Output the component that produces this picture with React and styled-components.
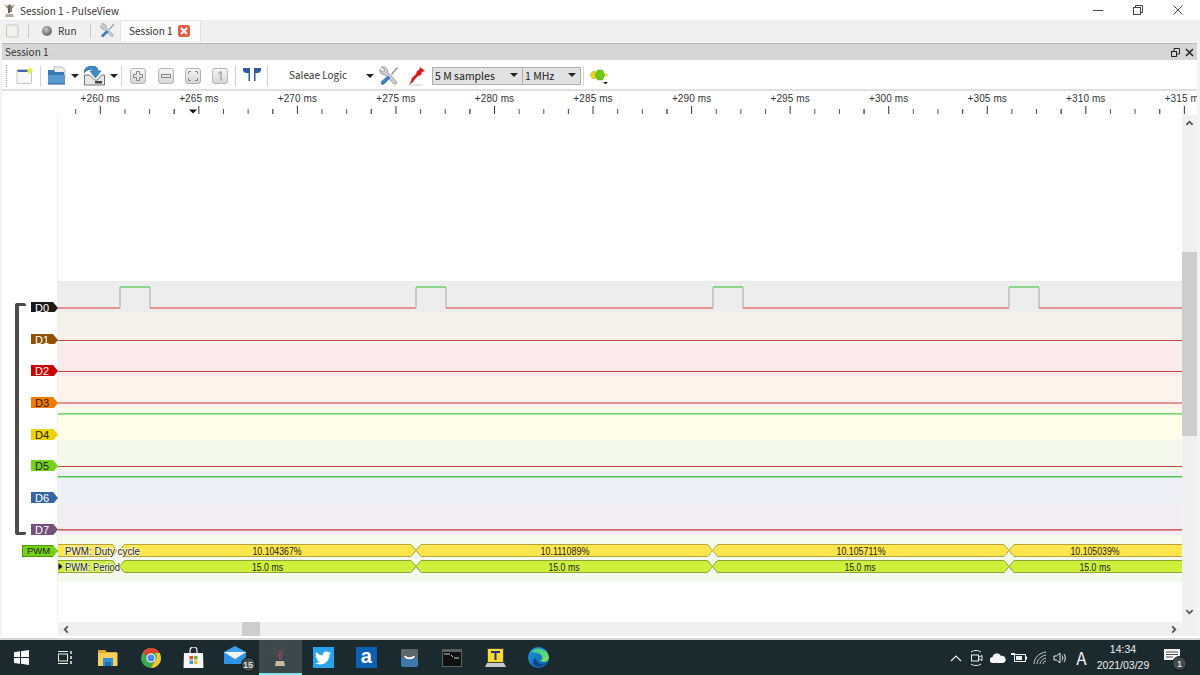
import React from "react";
import styled, { createGlobalStyle } from "styled-components";
import { FaTwitter } from "react-icons/fa";

const Global = createGlobalStyle`
  html, body { margin: 0; padding: 0; background: #fff; overflow: hidden; }
  body { font-family: "Liberation Sans", Arial, sans-serif; color: #222; }
  * { box-sizing: border-box; }
`;

const UI = `"Noto Sans CJK JP", "Liberation Sans", sans-serif`;
const Window = styled.div`width:1200px;height:675px;display:flex;flex-direction:column;background:#fff;overflow:hidden;`;

/* title */
const TitleBar = styled.div`height:20px;display:flex;align-items:center;padding-left:3px;font:10px ${UI};color:#333;flex:none;`;
const TitleText = styled.span`margin-left:4px;flex:1;`;
const WinControls = styled.div`display:flex;width:120px;margin-right:2px;`;
const WinButton = styled.div`width:40px;height:20px;display:flex;align-items:center;justify-content:center;`;

/* tabs */
const TabBar = styled.div`height:21px;background:#f0f0f0;display:flex;align-items:flex-end;flex:none;`;
const TabTool = styled.div`height:20px;display:flex;align-items:center;flex:none;width:${p => p.$w}px;margin-left:${p => p.$ml || 0}px;gap:5px;font:10px ${UI};color:#333;padding-bottom:1px;`;
const TabSep = styled.div`width:1px;height:14px;background:#c8c8c8;margin:0 0 3px ${p => p.$ml}px;flex:none;`;
const Tab = styled.div`width:81px;height:21px;background:#fbfbfb;border:1px solid #e2e2e2;border-bottom:none;margin-left:5px;display:flex;align-items:center;padding:0 0 1px 8px;font:10px ${UI};color:#333;gap:5px;`;
const TabClose = styled.span`width:12px;height:12px;background:#e2604a;border-radius:2px;color:#fff;display:flex;align-items:center;justify-content:center;`;

/* dock */
const Dock = styled.div`flex:1;display:flex;flex-direction:column;background:#f3f3f3;padding:2px 3px 0 2px;min-height:0;`;
const DockHeader = styled.div`height:17px;flex:none;background:#d6d6d6;border-top:1px solid #b9b9b9;display:flex;align-items:center;padding:0 3px;font:10px ${UI};color:#333;justify-content:space-between;`;
const DockTitle = styled.span`margin-bottom:2px;`;
const DockButtons = styled.div`display:flex;gap:5px;align-items:center;`;
const Toolbar = styled.div`height:31px;flex:none;background:#fff;border-bottom:2px solid #dfdfdf;display:flex;align-items:center;padding-top:2px;`;
const Grip = styled.div`width:1px;height:22px;margin-left:4px;border-left:1px dotted #999;flex:none;`;
const Slot = styled.div`flex:none;width:${p => p.$w}px;margin-left:${p => p.$ml || 0}px;display:flex;align-items:center;justify-content:center;`;
const ToolSep = styled.div`flex:none;width:1px;height:20px;background:#d4d4d4;margin-left:${p => p.$ml}px;`;
const ZoomBtn = styled.div`flex:none;width:16px;height:16px;margin-left:${p => p.$ml}px;border:1px solid #b4b4b4;border-radius:3px;background:linear-gradient(#f6f6f6,#d6d6d6);display:flex;align-items:center;justify-content:center;`;
const DeviceName = styled.span`flex:none;width:57px;margin:0 0 2px 21px;font:10px ${UI};color:#333;white-space:nowrap;`;
const Combo = styled.div`flex:none;width:${p => p.$w}px;height:18px;background:#e1e1e1;border:1px solid #adadad;margin-left:${p => p.$ml || 0}px;display:flex;align-items:center;justify-content:space-between;padding:0 4px 1px 2px;font:10.5px ${UI};color:#222;`;
const Caret = styled.span`display:block;width:0;height:0;border-left:4px solid transparent;border-right:4px solid transparent;border-top:4px solid #222;`;

const RulerBox = styled.div`height:24px;flex:none;background:#fff;`;
const RulerText = styled.text`font:10px "Liberation Sans",sans-serif;fill:#333;letter-spacing:.1px;`;

const Main = styled.div`flex:1;display:flex;min-height:0;background:#fff;`;
const Content = styled.div`flex:1;display:flex;flex-direction:column;min-width:0;`;
const Traces = styled.div`flex:1;position:relative;display:flex;flex-direction:column;`;
const Row = styled.div`display:flex;flex:none;height:${p => p.$h}px;`;
const FillRow = styled.div`display:flex;flex:1;min-height:0;`;
const Gutter = styled.div`width:56px;flex:none;background:#fff;border-right:1px solid #efefef;display:flex;justify-content:flex-end;padding-top:${p => p.$pt || 0}px;position:relative;z-index:1;`;
const Lane = styled.div`flex:1;background:${p => p.$bg || "#fff"};position:relative;min-width:0;`;
const LaneSvg = styled.svg`display:block;overflow:${p => p.$clip ? "hidden" : "visible"};position:absolute;left:0;top:0;`;
const ChannelTag = styled.div`width:${p => p.$w || 27}px;height:12px;margin-right:-1px;background:${p => p.$c};color:${p => p.$t};${p => p.$edge ? `box-shadow:inset 0 0 0 1px ${p.$edge};` : ""}clip-path:polygon(0 0,calc(100% - 5px) 0,100% 50%,calc(100% - 5px) 100%,0 100%);font:${p => p.$fs || 11}px "Liberation Sans",sans-serif;line-height:12px;display:flex;align-items:center;padding-left:${p => p.$pl || 4}px;flex:none;`;
const Bracket = styled.div`position:absolute;left:13px;top:188px;width:11px;height:232px;border:3px solid #4c4c4a;border-left-width:4px;border-right:none;border-radius:2px;z-index:2;`;
const AnnoText = styled.text`font:10.5px "Liberation Sans",sans-serif;fill:#222;text-anchor:middle;`;
const AnnoTitle = styled.text`font:10.5px "Liberation Sans",sans-serif;fill:#222;paint-order:stroke;stroke:#ffffffaa;stroke-width:2px;`;

const HScroll = styled.div`height:14px;flex:none;margin-left:56px;background:#f0f0f0;display:flex;align-items:center;justify-content:space-between;padding:0 4px;position:relative;`;
const HThumb = styled.div`position:absolute;left:184px;top:0;width:18px;height:14px;background:#cdcdcd;`;
const VScroll = styled.div`width:15px;flex:none;background:#f0f0f0;display:flex;flex-direction:column;align-items:center;justify-content:space-between;padding:4px 0 20px;position:relative;`;
const VThumb = styled.div`position:absolute;left:0;top:137px;width:15px;height:184px;background:#cdcdcd;`;
const Edge = styled.div`height:4px;flex:none;background:#fff;border-bottom:2px solid #d8d8d8;margin:0 -3px 0 -2px;`;

/* taskbar */
const Taskbar = styled.div`height:35px;flex:none;background:#1b2a2f;display:flex;align-items:center;color:#fff;`;
const TaskSlot = styled.div`width:43.1px;height:35px;flex:none;display:flex;align-items:center;justify-content:center;position:relative;${p => p.$active ? "background:#3b484c;border-bottom:2px solid #7fe6ee;" : ""}`;
const Badge = styled.span`position:absolute;right:${p => p.$r || 3}px;bottom:${p => p.$b || 3}px;width:15px;height:15px;border-radius:50%;background:#3d4a4e;border:1px solid #111;color:#ddd;font:700 9px "Liberation Sans",sans-serif;display:flex;align-items:center;justify-content:center;`;
const Tray = styled.div`margin-left:auto;display:flex;align-items:center;height:35px;padding-right:9px;`;
const TrayItem = styled.div`width:21px;height:35px;display:flex;align-items:center;justify-content:center;font:17px ${UI};color:#f0f0f0;`;
const Clock = styled.div`width:62px;margin-right:3px;display:flex;flex-direction:column;align-items:center;gap:3px;font:10.5px "Liberation Sans",sans-serif;color:#eee;line-height:13px;`;
const Notify = styled.div`width:34px;height:35px;display:flex;align-items:center;justify-content:center;position:relative;`;

/* data */
const T0 = 100.3, P = 98.55;
const majors = Array.from({ length: 12 }, (_, i) => i);
const px = x => x - 2;

function Ruler() {
  return (
    <RulerBox>
      <svg width="1195" height="24" style={{ display: "block" }}>
        {majors.map(i => (
          <g key={i}>
            <RulerText x={px(T0 + i * P)} y="11" textAnchor="middle">+{260 + i * 5} ms</RulerText>
            <rect x={px(T0 + i * P) - .5} y="15" width="1" height="8" fill="#333" />
            {[-1, 1, 2, 3].map(k => {
              const x = px(T0 + i * P + k * P / 4);
              if (x > 1195 || (k !== -1 && i === 11)) return null;
              return <rect key={k} x={x - .5} y="18" width="1" height="5" fill="#555" />;
            })}
          </g>
        ))}
        <path d={`M${px(189)} 18.5h8l-4 4z`} fill="#111" />
      </svg>
    </RulerBox>
  );
}

const RED = "#c64646", SOFT = "#e07474", GREEN = "#4cc74c";
const channels = [
  { n: "D0", h: 31, pt: 21, bg: "#ededed", c: "#1a1a1a", t: "#fff" },
  { n: "D1", h: 32, pt: 22, bg: "#f5f0e9", c: "#8f5202", t: "#fff", y: 28.5, s: RED, w: 1 },
  { n: "D2", h: 32, pt: 21, bg: "#fbeaea", c: "#cc0000", t: "#fff", y: 27.5, s: RED, w: 1 },
  { n: "D3", h: 32, pt: 21, bg: "#fef3ea", c: "#f57900", t: "#222", y: 27, s: SOFT, w: 1.6 },
  { n: "D4", h: 32, pt: 20.5, bg: "#fefde8", c: "#edd400", t: "#222", y: 5.8, s: GREEN, w: 1.3 },
  { n: "D5", h: 31, pt: 20, bg: "#f2f8ea", c: "#73d216", t: "#222", y: 26.5, s: RED, w: 1 },
  { n: "D6", h: 32, pt: 21, bg: "#eef0f7", c: "#3465a4", t: "#fff", y: 5.8, s: GREEN, w: 1.4 },
  { n: "D7", h: 32, pt: 20.5, bg: "#f1edf2", c: "#75507b", t: "#fff", y: 26.8, s: "#c83838", w: 1.3 },
];
const pulses = [[62, 92], [358, 388], [655, 685], [951, 981]];

function Wave() {
  let prev = 0;
  const parts = [];
  pulses.forEach(([a, b], i) => {
    parts.push(<path key={"l" + i} d={`M${prev} 27H${a}`} stroke={SOFT} strokeWidth="1.6" fill="none" />);
    parts.push(<path key={"e" + i} d={`M${a} 6V27M${b} 6V27`} stroke="#bdbdbd" strokeWidth="1.5" fill="none" />);
    parts.push(<path key={"h" + i} d={`M${a} 6H${b}`} stroke="#6ecf6e" strokeWidth="1.5" fill="none" />);
    prev = b;
  });
  parts.push(<path key="end" d={`M${prev} 27H1124`} stroke={SOFT} strokeWidth="1.6" fill="none" />);
  return <LaneSvg width="1124" height="32">{parts}</LaneSvg>;
}

function Channel({ ch }) {
  return (
    <Row $h={ch.h}>
      <Gutter $pt={ch.pt}><ChannelTag $c={ch.c} $t={ch.t}>{ch.n}</ChannelTag></Gutter>
      <Lane $bg={ch.bg}>
        {ch.n === "D0" ? <Wave /> : (
          <LaneSvg width="1124" height="32">
            <path d={`M0 ${ch.y}H1124`} stroke={ch.s} strokeWidth={ch.w} fill="none" />
          </LaneSvg>
        )}
      </Lane>
    </Row>
  );
}

const edges = [61.5, 358, 654.5, 951];
function AnnoRow({ top, fill, stroke, labels, len }) {
  const b = top + 12;
  const m = top + 6;
  const seg = (x0, x1) => `M${x0 + 5} ${top}H${x1 - 5}L${x1} ${m}L${x1 - 5} ${b}H${x0 + 5}L${x0} ${m}Z`;
  return (
    <g>
      <path d={`M-2 ${top}H${edges[0] - 7}L${edges[0] - 3} ${m}L${edges[0] - 7} ${b}H-2`} fill={fill} stroke={stroke} />
      {edges.map((e, i) => (
        <path key={i} d={i === 3 ? `M1125 ${top}H${e + 5}L${e} ${m}L${e + 5} ${b}H1125` : seg(e, edges[i + 1])} fill={fill} stroke={stroke} />
      ))}
      {labels.map(([x, s], i) => <AnnoText key={i} x={x} y={top + 10} textLength={len} lengthAdjust="spacingAndGlyphs">{s}</AnnoText>)}
    </g>
  );
}

function Decoder() {
  return (
    <Row $h={47}>
      <Gutter $pt={10}><ChannelTag $c="#73d216" $t="#222" $edge="#4e9a06" $w={36} $pl={5} $fs={9.5}>PWM</ChannelTag></Gutter>
      <Lane $bg="#f4fbea">
        <LaneSvg width="1124" height="47" $clip>
          <AnnoRow top={9.5} fill="#fde54c" stroke="#b5a440" len={49} labels={[[219, "10.104367%"], [507, "10.111089%"], [803, "10.105711%"], [1037, "10.105039%"]]} />
          <AnnoRow top={25.5} fill="#cdf03a" stroke="#93a236" len={31} labels={[[209.5, "15.0 ms"], [506, "15.0 ms"], [802, "15.0 ms"], [1037, "15.0 ms"]]} />
          <AnnoTitle x="7" y="19.5" textLength="75" lengthAdjust="spacingAndGlyphs">PWM: Duty cycle</AnnoTitle>
          <AnnoTitle x="7" y="35.5" textLength="55" lengthAdjust="spacingAndGlyphs">PWM: Period</AnnoTitle>
          <path d="M0.5 28l4 3.500-4 3.500z" fill="#111" />
        </LaneSvg>
      </Lane>
    </Row>
  );
}

/* icons */
const Chev = ({ d, size = 9 }) => (
  <svg width={size} height={size} viewBox="0 0 10 10"><path d={d} fill="none" stroke="#555" strokeWidth="2" /></svg>
);
const NewIcon = () => (
  <svg width="18" height="18" viewBox="0 0 18 18">
    <rect x="1" y="2.500" width="14.500" height="14" rx="1" fill="#f8f8f4" stroke="#c4c4c0" />
    <rect x="1.500" y="3" width="13" height="2" fill="#3c6ea8" />
    <circle cx="14" cy="3.500" r="2.600" fill="#f3e83c" />
  </svg>
);
const OpenIcon = () => (
  <svg width="20" height="20" viewBox="0 0 20 20">
    <path d="M7 1h8l3 3v9H7z" fill="#efefef" stroke="#aaa" strokeWidth=".8" />
    <path d="M1 4h6l1 2h9v12H1z" fill="#3a78b8" />
    <path d="M1 9h17v9H1z" fill="#5a9ad2" />
    <path d="M1 18h17" stroke="#2a5a90" />
  </svg>
);
const SaveIcon = () => (
  <svg width="21" height="20" viewBox="0 0 21 20">
    <path d="M.5 9h5l5 5h3l4-5h3v10H.5z" fill="#e4e6e7" stroke="#555" strokeWidth=".8" />
    <rect x="11" y="15" width="7" height="2.500" fill="#444" />
    <path d="M0 7C0 2 4 0 8 0s6 2 6 5h3l-5.500 7L6 5h3C9 4 8 3.500 7 3.500 4 3.500 2 5 0 7z" fill="#3e8ccb" stroke="#1d5a8e" strokeWidth=".6" />
  </svg>
);
const FlagIcon = () => (
  <svg width="20" height="18" viewBox="0 0 20 18" fill="#2a5f9a">
    <path d="M1 1h7v13H6.500V6H4C2.500 6 1 4.500 1 3zM19 1h-7v13h1.500V6H16c1.500 0 3-1.500 3-3z" />
  </svg>
);
const ToolsIcon = ({ s = 20 }) => (
  <svg width={s} height={s} viewBox="0 0 20 20">
    <path d="M2 1l3.500 3-.5 1.500L3.500 6 1 3c-1 3 1 6 4 5.500L15 18c1.500 1 3.500-.5 2.500-2.500L8.500 6C9 3 6 0 2 1z" fill="#c6ccd0" stroke="#808080" strokeWidth=".6" />
    <path d="M18 1l1 1-6 7-1-1z" fill="#8a8f92" />
    <path d="M9 10l2 2-6 6c-2 1.500-4-.5-2.500-2.500z" fill="#3f7fc0" stroke="#25558a" strokeWidth=".5" />
  </svg>
);
const ProbeIcon = () => (
  <svg width="18" height="20" viewBox="0 0 18 20">
    <path d="M12 1l5 4-3 1-1 3-3 1-5 5-2-2 5-5 1-3 2-1z" fill="#d91a1a" />
    <path d="M4 13l2 2-5 4z" fill="#c41515" />
    <path d="M3 19h12" stroke="#ddd" strokeWidth="1.500" />
  </svg>
);
const DecoderIcon = () => (
  <svg width="20" height="18" viewBox="0 0 20 18">
    <path d="M1 8l2.500-3.500h3L8 8l-1.500 3.500h-3z" fill="#f0d020" stroke="#c0a520" strokeWidth=".5" />
    <path d="M6 8l2.500-5h5L16 8l-2.500 5h-5z" fill="#6ec81a" stroke="#5aa515" strokeWidth=".5" />
    <path d="M16 8l1-1.500h1L19 8l-1 1.500h-1z" fill="#f0d020" />
    <path d="M14 15h5l-2.500 2.500z" fill="#222" />
  </svg>
);
const Hourglass = () => (
  <svg width="13" height="15" viewBox="0 0 13 15">
    <path d="M1 1l4 5v3H9V6l3-5-3 2-2-2-3 2z" fill="#8a7f70" />
    <path d="M3 11h7l1 3H2z" fill="#b9ac95" />
    <path d="M6 3v7" stroke="#6a5f50" strokeWidth="2" />
  </svg>
);
const TabNew = () => (
  <svg width="13" height="14" viewBox="0 0 13 14"><rect x=".5" y="1" width="11.500" height="12" rx="1" fill="#f2f2ec" stroke="#c6c6c2" /></svg>
);
const RunDot = () => (
  <svg width="12" height="12" viewBox="0 0 12 12"><defs><radialGradient id="rd" cx=".4" cy=".35"><stop offset="0" stopColor="#ccc" /><stop offset="1" stopColor="#777" /></radialGradient></defs><circle cx="6" cy="6" r="5" fill="url(#rd)" /></svg>
);

const WinLogo = () => (
  <svg width="15" height="15" viewBox="0 0 15 15" fill="#fff"><path d="M0 2.200l6-.9v5.800H0zM7 1.200l8-1.200v7.100H7zM0 8h6v5.800l-6-.9zM7 8h8v7l-8-1.200z" /></svg>
);
const TaskView = () => (
  <svg width="16" height="15" viewBox="0 0 16 15" fill="none" stroke="#eee"><rect x="1.500" y="4" width="9" height="7" /><path d="M1 1.500h10M1 13.500h10" /><path d="M14 1v3M14 6v3M14 11v3" strokeWidth="1.500" /></svg>
);
const Explorer = () => (
  <svg width="20" height="17" viewBox="0 0 20 17"><path d="M0 1h7l2 2h10v3H0z" fill="#e0a92c" /><path d="M0 4h19.500v13H0z" fill="#f7cf5b" /><path d="M5 9h10v8h-2v-4H7v4H5z" fill="#2f8fd8" /><rect x="7" y="13" width="6" height="4" fill="#1d6eb0" /></svg>
);
const Chrome = () => (
  <svg width="20" height="20" viewBox="0 0 20 20">
    <circle cx="10" cy="10" r="10" fill="#3da84e" />
    <path d="M10 0a10 10 0 0 1 8.660 5H10a5 5 0 0 0-4.500 3L1.800 4.200A10 10 0 0 1 10 0z" fill="#dd4535" />
    <path d="M18.660 5A10 10 0 0 1 10 20l4.300-7.500A5 5 0 0 0 14 5z" fill="#f6c530" />
    <circle cx="10" cy="10" r="4.600" fill="#fff" /><circle cx="10" cy="10" r="3.500" fill="#4a85f0" />
  </svg>
);
const Store = () => (
  <svg width="21" height="22" viewBox="0 0 21 22">
    <path d="M7 6V3.500a3.500 3.500 0 0 1 7 0V6" fill="none" stroke="#eee" strokeWidth="1.200" />
    <path d="M1 6h19l.5 15H.5z" fill="#f5f5f5" />
    <rect x="6.500" y="9" width="3.500" height="3.500" fill="#e2492f" /><rect x="11" y="9" width="3.500" height="3.500" fill="#72b52a" />
    <rect x="6.500" y="13.500" width="3.500" height="3.500" fill="#2f9be0" /><rect x="11" y="13.500" width="3.500" height="3.500" fill="#f5bb1c" />
  </svg>
);
const Mail = () => (
  <svg width="22" height="20" viewBox="0 0 22 20" style={{ marginLeft: -4, marginTop: -4 }}>
    <path d="M0 6L11 0l11 6v12H0z" fill="#3aa0ea" /><path d="M0 6h22L11 13z" fill="#f4f4f4" /><path d="M0 7l11 7 11-7v11H0z" fill="#2f95e2" />
  </svg>
);
const PulseTask = () => (
  <svg width="18" height="22" viewBox="0 0 18 22">
    <path d="M2 3l6 7M15 3l-5 7M5 1l3 9M12 1L10 10M0 7l8 4M17 7l-7 4" stroke="#5c5042" strokeWidth="1" />
    <path d="M8 4h1v10H8z" fill="#c03030" /><path d="M9.500 4h1v10h-1z" fill="#7a4fb0" />
    <path d="M5 15h8l1 5H4z" fill="#c9baa0" />
  </svg>
);
const Twitter = styled.div`width:21px;height:21px;background:#2aa3ef;display:flex;align-items:center;justify-content:center;color:#fff;font-size:16px;`;
const AppA = styled.div`width:21px;height:21px;background:#0b62b3;display:flex;align-items:center;justify-content:center;color:#fff;font:700 20px "Liberation Sans",sans-serif;line-height:17px;padding-bottom:3px;`;
const Pocket = () => (
  <svg width="17" height="18" viewBox="0 0 17 18"><rect width="17" height="18" rx="2" fill="#3f78ad" /><path d="M0 2a2 2 0 0 1 2-2h13a2 2 0 0 1 2 2v7H0z" fill="#5c666b" /><path d="M4 7c1 3 8 3 9 0" fill="none" stroke="#fff" strokeWidth="2" /></svg>
);
const Terminal = () => (
  <svg width="20" height="18" viewBox="0 0 20 18"><rect width="20" height="18" fill="#5a6163" /><rect x="1" y="3" width="18" height="14" fill="#111" /><path d="M2 5h6M9 6l2 2M12 9h5" stroke="#ccc" strokeWidth="1" /></svg>
);
const TApp = () => (
  <svg width="21" height="21" viewBox="0 0 21 21"><rect x="2" y="1" width="17" height="15" fill="#444" /><rect x="3" y="2" width="15" height="13" fill="#f3dc2c" /><path d="M6 4h9v2h-3.500v7h-2V6H6z" fill="#2a2a8c" /><path d="M2 16h17l2 4H0z" fill="#c8c8c8" /></svg>
);
const Edge21 = () => (
  <svg width="21" height="21" viewBox="0 0 21 21">
    <defs><linearGradient id="eg" x1="0" y1="0" x2="1" y2="1"><stop offset="0" stopColor="#1f9cdc" /><stop offset="1" stopColor="#0c55a8" /></linearGradient>
      <linearGradient id="eg2" x1="0" y1="0" x2="1" y2="1"><stop offset="0" stopColor="#36c8a0" /><stop offset="1" stopColor="#7fdc58" /></linearGradient></defs>
    <circle cx="10.500" cy="10.500" r="10.500" fill="url(#eg)" />
    <path d="M3 5A10.500 10.500 0 0 1 21 10c.2 3-2 5-5 5-2.500 0-4-1-4-2 3 0 3-3 1-5S6 5 3 5z" fill="url(#eg2)" />
    <path d="M8 11c0 4 4 7 8 6-3 3-8 3-11 0 0-3 1-5 3-6z" fill="#0a3f8c" />
  </svg>
);
const Meet = () => (
  <svg width="14" height="18" viewBox="0 0 14 18" fill="none" stroke="#eee"><path d="M1 3c3-2 7-2 10 0M1 15c3 2 7 2 10 0" /><rect x="1.500" y="6" width="7" height="6" /><path d="M9 8l3-1.500v5L9 10" /></svg>
);
const Cloud = () => (
  <svg width="16" height="10" viewBox="0 0 16 10" fill="#f4f4f4"><path d="M3 10a3 3 0 0 1-.5-6A4.500 4.500 0 0 1 11 3a3.500 3.500 0 0 1 2 7z" /></svg>
);
const Battery = () => (
  <svg width="16" height="11" viewBox="0 0 16 11"><rect x="3.500" y="2.500" width="11" height="7" fill="none" stroke="#eee" /><rect x="5" y="4" width="6" height="4" fill="#eee" /><path d="M15 4.500h1v3h-1" fill="#eee" /><path d="M0 1h4v2H0z" fill="#eee" /></svg>
);
const Wifi = () => (
  <svg width="14" height="14" viewBox="0 0 14 14" fill="none" stroke="#ccc"><path d="M1 13C1 7 6 2 13 1M4 13c0-4 4-8 9-9M7 13c0-2 2-5 6-6M10 13c0-1 1-3 3-3" /></svg>
);
const Volume = () => (
  <svg width="15" height="14" viewBox="0 0 15 14" fill="none" stroke="#eee"><path d="M1 5h2.500L7 2v10L3.500 9H1zM9 4.500c1 1.500 1 3.500 0 5M11 3c1.700 2.500 1.700 5.500 0 8" /></svg>
);
const NotifyIcon = () => (
  <svg width="16" height="14" viewBox="0 0 16 14" style={{ marginTop: -3, marginLeft: -5 }}><path d="M0 0h16v11H0z" fill="#f2f2f2" /><path d="M2 3h12M2 5.500h12M2 8h7" stroke="#555" /></svg>
);

export default function App() {
  return (
    <>
      <Global />
      <Window>
        <TitleBar>
          <Hourglass />
          <TitleText>Session 1 - PulseView</TitleText>
          <WinControls>
            <WinButton><svg width="10" height="10"><path d="M0 5.500h10" stroke="#444" /></svg></WinButton>
            <WinButton><svg width="10" height="10" fill="none" stroke="#444"><rect x=".5" y="2.500" width="7" height="7" /><path d="M2.500 2.500v-2h7v7h-2" /></svg></WinButton>
            <WinButton><svg width="10" height="10" stroke="#444"><path d="M.5.5l9 9M9.500.5l-9 9" /></svg></WinButton>
          </WinControls>
        </TitleBar>
        <TabBar>
          <TabTool $w={13} $ml={6}><TabNew /></TabTool>
          <TabSep $ml={9} />
          <TabTool $w={48} $ml={12}><RunDot /><span>Run</span></TabTool>
          <TabSep $ml={1} />
          <TabTool $w={15} $ml={9}><ToolsIcon s={15} /></TabTool>
          <Tab>Session 1<TabClose><svg width="8" height="8" stroke="#fff" strokeWidth="1.800"><path d="M1 1l6 6M7 1L1 7" /></svg></TabClose></Tab>
        </TabBar>
        <Dock>
          <DockHeader>
            <DockTitle>Session 1</DockTitle>
            <DockButtons>
              <svg width="9" height="9" fill="none" stroke="#222"><rect x=".5" y="3.500" width="5" height="5" /><path d="M3 3V.5h5.500V6H6" /></svg>
              <svg width="9" height="9" stroke="#222" strokeWidth="1.500"><path d="M1 1l7 7M8 1L1 8" /></svg>
            </DockButtons>
          </DockHeader>
          <Toolbar>
            <Grip />
            <Slot $w={18} $ml={9}><NewIcon /></Slot>
            <ToolSep $ml={6} />
            <Slot $w={20} $ml={6}><OpenIcon /></Slot>
            <Slot $w={8} $ml={4}><Caret /></Slot>
            <Slot $w={21} $ml={5}><SaveIcon /></Slot>
            <Slot $w={8} $ml={5}><Caret /></Slot>
            <ToolSep $ml={3} />
            <ZoomBtn $ml={8}><svg width="10" height="10" fill="none" stroke="#888"><path d="M3.500.5h3v3h3v3h-3v3h-3v-3h-3v-3h3z" /></svg></ZoomBtn>
            <ZoomBtn $ml={12}><svg width="10" height="10" fill="none" stroke="#888"><rect x=".5" y="3.500" width="9" height="3" /></svg></ZoomBtn>
            <ZoomBtn $ml={11}><svg width="10" height="10" fill="none" stroke="#888"><path d="M.5 3V.5H3M7 .5h2.500V3M9.500 7v2.500H7M3 9.500H.5V7" /></svg></ZoomBtn>
            <ZoomBtn $ml={11}><svg width="10" height="10" fill="none" stroke="#888"><path d="M3 3l3-2.500v9" /></svg></ZoomBtn>
            <ToolSep $ml={7} />
            <Slot $w={20} $ml={6}><FlagIcon /></Slot>
            <ToolSep $ml={5} />
            <DeviceName>Saleae Logic</DeviceName>
            <Slot $w={8} $ml={20}><Caret /></Slot>
            <Slot $w={20} $ml={5}><ToolsIcon /></Slot>
            <Slot $w={18} $ml={9}><ProbeIcon /></Slot>
            <Combo $w={91} $ml={6}><span>5 M samples</span><Caret /></Combo>
            <Combo $w={59} $ml={-1}><span>1 MHz</span><Caret /></Combo>
            <ToolSep $ml={2} />
            <Slot $w={20} $ml={5}><DecoderIcon /></Slot>
          </Toolbar>
          <Ruler />
          <Main>
            <Content>
              <Traces>
                <Row $h={166}><Gutter /><Lane /></Row>
                {channels.map(ch => <Channel key={ch.n} ch={ch} />)}
                <Decoder />
                <FillRow><Gutter /><Lane /></FillRow>
                <Bracket />
              </Traces>
              <HScroll>
                <Chev d="M6.500 1.500L3 5l3.500 3.500" />
                <HThumb />
                <Chev d="M3.500 1.500L7 5 3.500 8.500" />
              </HScroll>
            </Content>
            <VScroll>
              <Chev d="M1.500 6.500L5 3l3.500 3.500" />
              <VThumb />
              <Chev d="M1.500 3.500L5 7l3.500-3.500" />
            </VScroll>
          </Main>
          <Edge />
        </Dock>
        <Taskbar>
          <TaskSlot><WinLogo /></TaskSlot>
          <TaskSlot><TaskView /></TaskSlot>
          <TaskSlot><Explorer /></TaskSlot>
          <TaskSlot><Chrome /></TaskSlot>
          <TaskSlot><Store /></TaskSlot>
          <TaskSlot><Mail /><Badge>15</Badge></TaskSlot>
          <TaskSlot $active><PulseTask /></TaskSlot>
          <TaskSlot><Twitter><FaTwitter /></Twitter></TaskSlot>
          <TaskSlot><AppA>a</AppA></TaskSlot>
          <TaskSlot><Pocket /></TaskSlot>
          <TaskSlot><Terminal /></TaskSlot>
          <TaskSlot><TApp /></TaskSlot>
          <TaskSlot><Edge21 /></TaskSlot>
          <Tray>
            <TrayItem><svg width="12" height="8" fill="none" stroke="#eee" strokeWidth="1.200"><path d="M1 7l5-5 5 5" /></svg></TrayItem>
            <TrayItem><Meet /></TrayItem>
            <TrayItem><Cloud /></TrayItem>
            <TrayItem><Battery /></TrayItem>
            <TrayItem><Wifi /></TrayItem>
            <TrayItem><Volume /></TrayItem>
            <TrayItem>A</TrayItem>
            <Clock><span>14:34</span><span>2021/03/29</span></Clock>
            <Notify><NotifyIcon /><Badge $r={4} $b={4}>1</Badge></Notify>
          </Tray>
        </Taskbar>
      </Window>
    </>
  );
}
